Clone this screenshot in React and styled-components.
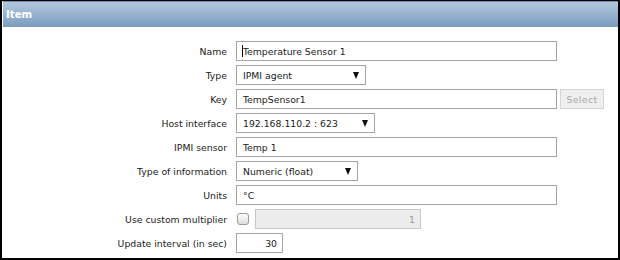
import { createGlobalStyle, styled } from "styled-components";

const GlobalStyle = createGlobalStyle`
  html, body {
    margin: 0;
    padding: 0;
    background: #ffffff;
  }
  body {
    font-family: "DejaVu Sans", Verdana, sans-serif;
  }
`;

const Frame = styled.div`
  box-sizing: border-box;
  width: 620px;
  height: 260px;
  border-style: solid;
  border-color: #000;
  border-width: 1px 2px 2px 2px;
  background: #fff;
  overflow: hidden;
`;

const Header = styled.div`
  height: 26px;
  margin: 0 0 0 1px;
  box-sizing: border-box;
  border-top: 1px solid #6f8fae;
  background: linear-gradient(#b2c7dc, #7b9cbf);
  color: #fff;
  font-weight: bold;
  font-size: 10.2px;
  display: flex;
  align-items: center;
  padding-left: 3px;
`;

const Form = styled.div`
  display: grid;
  grid-template-columns: 225px 1fr;
  column-gap: 9px;
  row-gap: 4px;
  padding-top: 14px;
`;

const Label = styled.div`
  height: 20px;
  display: flex;
  align-items: center;
  justify-content: flex-end;
  font-size: 9.3px;
  color: #1a1a1a;
  white-space: nowrap;
`;

const Field = styled.div`
  display: flex;
  align-items: center;
  gap: ${(p) => p.$gap || 3}px;
  height: 20px;
`;

const TextBox = styled.div`
  box-sizing: border-box;
  width: ${(p) => p.$w}px;
  height: 20px;
  border: 1px solid ${(p) => (p.$disabled ? "#c8c8c4" : "#a6a69e")};
  background: ${(p) => (p.$disabled ? "#ececec" : "#fff")};
  color: ${(p) => (p.$disabled ? "#9a9a9a" : "#1a1a1a")};
  font-size: 9.3px;
  display: flex;
  align-items: center;
  justify-content: ${(p) => (p.$right ? "flex-end" : "flex-start")};
  padding: 0 ${(p) => (p.$right ? 5 : 6)}px 0 6px;
  white-space: nowrap;
`;

const Caret = styled.span`
  display: inline-block;
  width: 1px;
  height: 12px;
  background: #000;
  margin-left: -1px;
`;

const Dropdown = styled(TextBox)`
  justify-content: space-between;
  padding-right: 6px;
`;

const Arrow = styled.span`
  width: 0;
  height: 0;
  border-left: 3.5px solid transparent;
  border-right: 3.5px solid transparent;
  border-top: 7px solid #111;
`;

const SelectButton = styled.div`
  box-sizing: border-box;
  width: 44px;
  height: 20px;
  border: 1px solid #d4d4d4;
  background: #efefef;
  color: #a8a8a8;
  font-size: 9.3px;
  letter-spacing: 0.4px;
  display: flex;
  align-items: center;
  justify-content: center;
`;

const Check = styled.div`
  box-sizing: border-box;
  width: 12px;
  height: 12px;
  margin-left: 1px;
  border: 1px solid #9a9a9a;
  border-radius: 3px;
  background: linear-gradient(#ffffff, #dcdcdc);
`;

export default function App() {
  return (
    <Frame>
      <GlobalStyle />
      <Header>Item</Header>
      <Form>
        <Label>Name</Label>
        <Field>
          <TextBox $w={321}>
            <Caret />
            Temperature Sensor 1
          </TextBox>
        </Field>

        <Label>Type</Label>
        <Field>
          <Dropdown $w={130}>
            IPMI agent
            <Arrow />
          </Dropdown>
        </Field>

        <Label>Key</Label>
        <Field>
          <TextBox $w={321}>TempSensor1</TextBox>
          <SelectButton>Select</SelectButton>
        </Field>

        <Label>Host interface</Label>
        <Field>
          <Dropdown $w={139}>
            192.168.110.2 : 623
            <Arrow />
          </Dropdown>
        </Field>

        <Label>IPMI sensor</Label>
        <Field>
          <TextBox $w={321}>Temp 1</TextBox>
        </Field>

        <Label>Type of information</Label>
        <Field>
          <Dropdown $w={122}>
            Numeric (float)
            <Arrow />
          </Dropdown>
        </Field>

        <Label>Units</Label>
        <Field>
          <TextBox $w={321}>°C</TextBox>
        </Field>

        <Label>Use custom multiplier</Label>
        <Field $gap={6}>
          <Check />
          <TextBox $w={166} $disabled $right>
            1
          </TextBox>
        </Field>

        <Label>Update interval (in sec)</Label>
        <Field>
          <TextBox $w={47} $right>
            30
          </TextBox>
        </Field>
      </Form>
    </Frame>
  );
}
